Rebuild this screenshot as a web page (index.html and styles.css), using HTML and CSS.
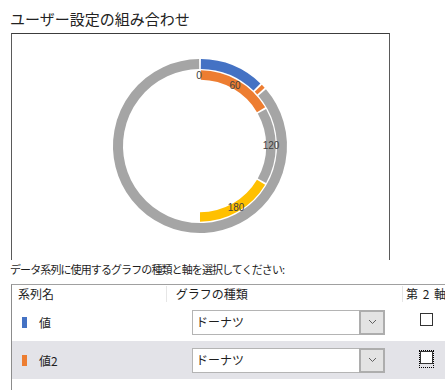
FILE: index.html
```html
<!DOCTYPE HTML>
<html>
<head>
    <meta http-equiv="Content-Type" content="text/html; charset=UTF-8"/>
    <title>ユーザー設定の組み合わせ</title>
    <link rel="stylesheet" href="styles.css">
</head>
<body>

<h1 class="title">ユーザー設定の組み合わせ</h1>

<div class="preview">
    <svg width="377" height="226" viewBox="12 34 377 226">
        <!-- outer ring -->
        <path class="seg blue" d="M200.86 64 A82 82 0 0 1 256.96 87.02"/>
        <path class="seg orange" d="M258.29 88.32 A82 82 0 0 1 260.94 91.13"/>
        <path class="seg gray" d="M262.16 92.53 A82 82 0 1 1 199.14 64"/>
        <!-- inner ring -->
        <path class="seg inner orange" d="M200.87 75 A71 71 0 0 1 261.05 109.75"/>
        <path class="seg inner gray" d="M261.92 111.25 A71 71 0 0 1 261.92 180.75"/>
        <path class="seg inner yellow" d="M261.05 182.25 A71 71 0 0 1 200 217"/>
        <!-- labels -->
        <text class="lbl" x="199" y="79">0</text>
        <text class="lbl" x="235" y="89">60</text>
        <text class="lbl" x="271" y="149">120</text>
        <text class="lbl" x="236" y="211">180</text>
    </svg>
</div>

<p class="hint">データ系列に使用するグラフの種類と軸を選択してください:</p>

<div class="series">
    <div class="row head">
        <div class="hcol hname">系列名</div>
        <div class="hcol htype">グラフの種類</div>
        <div class="hcol haxis">第 2 軸</div>
    </div>

    <div class="row">
        <div class="col name"><span class="swatch blue-bg"></span>値</div>
        <div class="col type">
            <div class="combo">
                <span class="combo-text">ドーナツ</span>
                <span class="combo-btn"><svg width="7" height="4"><polyline points="0,0 3.5,3.5 7,0"/></svg></span>
            </div>
        </div>
        <div class="col axis"><span class="check"><span class="box"></span></span></div>
    </div>

    <div class="row selected">
        <div class="col name"><span class="swatch orange-bg"></span>値2</div>
        <div class="col type">
            <div class="combo">
                <span class="combo-text">ドーナツ</span>
                <span class="combo-btn"><svg width="7" height="4"><polyline points="0,0 3.5,3.5 7,0"/></svg></span>
            </div>
        </div>
        <div class="col axis"><span class="check focus"><span class="box"></span></span></div>
    </div>
</div>

</body>
</html>
```

FILE: styles.css
```css
body {
    margin: 0;
    width: 445px;
    height: 390px;
    overflow: hidden;
    background: #fff;
    color: #1e1e1e;
    font-family: "Noto Sans CJK JP", "Noto Sans", sans-serif;
}

.title {
    margin: 0 0 1px 0;
    padding: 5px 0 0 10px;
    height: 27px;
    font-size: 15px;
    font-weight: normal;
    line-height: 27px;
    color: #222;
}

.preview {
    margin-left: 11px;
    width: 377px;
    height: 226px;
    border: 1px solid #5a5a5a;
    border-bottom: none;
    border-top-color: #3c3c3c;
}

.preview svg {
    display: block;
}

.seg {
    fill: none;
    stroke-width: 10;
}

.seg.inner {
    stroke-width: 9.5;
}

.blue { stroke: #4472c4; }
.orange { stroke: #ed7d31; }
.gray { stroke: #a5a5a5; }
.yellow { stroke: #ffc000; }

.lbl {
    font-family: "Liberation Sans", sans-serif;
    font-size: 10px;
    fill: #404040;
    text-anchor: middle;
}

.hint {
    margin: 0;
    padding-left: 10px;
    height: 24px;
    font-size: 11px;
    line-height: 18px;
    letter-spacing: -0.9px;
    white-space: nowrap;
}

.series {
    margin-left: 11px;
    width: 434px;
    height: 120px;
    overflow: hidden;
    border-left: 1px solid #8c8c8c;
    border-top: 1px solid #a0a0a0;
    font-size: 12px;
}

.row {
    display: flex;
    height: 38px;
    align-items: center;
}

.row.head {
    height: 18px;
    line-height: 16px;
    align-items: stretch;
}

.row.selected {
    background: #e3e3e8;
}

/* header cells */
.hcol {
    margin: 1px 0;
    border-left: 1px solid #e6e6e6;
    white-space: nowrap;
}

.hname {
    border-left: none;
    padding-left: 6px;
    width: 149px;
}

.htype {
    padding-left: 9px;
    width: 228px;
}

.haxis {
    flex: 1;
    padding-left: 3px;
    word-spacing: 2px;
}

/* body cells */
.col.name {
    padding-left: 10px;
    width: 145px;
    display: flex;
    align-items: center;
}

.col.type {
    width: 238px;
}

.col.axis {
    flex: 1;
    align-self: stretch;
    padding-left: 14px;
}

.swatch {
    display: inline-block;
    width: 5px;
    height: 11px;
    margin-right: 12px;
}

.blue-bg { background: #4472c4; }
.orange-bg { background: #ed7d31; }

.combo {
    margin-left: 25px;
    width: 191px;
    height: 23px;
    display: flex;
    border: 1px solid #b4b4b4;
    background: #fff;
}

.combo-text {
    flex: 1;
    padding-left: 3px;
    line-height: 22px;
}

.combo-btn {
    width: 22px;
    display: flex;
    align-items: center;
    justify-content: center;
    background: #e3e3e3;
    border: 2px solid #adadad;
    margin: -1px -1px -1px 0;
}

.combo-btn polyline {
    fill: none;
    stroke: #606060;
    stroke-width: 1;
}

.check {
    display: inline-block;
    margin-top: 9px;
    padding-bottom: 3px;
    border: 1px dotted transparent;
}

.check.focus {
    border-color: #000;
}

.box {
    display: block;
    width: 11px;
    height: 11px;
    border: 1px solid #333;
    background: #fff;
}
```
